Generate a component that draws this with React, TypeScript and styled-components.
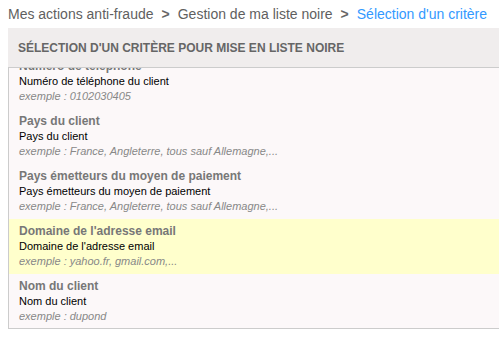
import { useEffect, useRef } from 'react';
import styled, { createGlobalStyle } from 'styled-components';

const GlobalStyle = createGlobalStyle`
  html, body {
    margin: 0;
    padding: 0;
    background: #ffffff;
    overflow: hidden;
  }
  body {
    font-family: 'Liberation Sans', Arial, sans-serif;
  }
`;

type Criterion = {
  title: string;
  desc: string;
  example: string;
};

const criteria: Criterion[] = [
  {
    title: 'Numéro de téléphone',
    desc: 'Numéro de téléphone du client',
    example: 'exemple : 0102030405',
  },
  {
    title: 'Pays du client',
    desc: 'Pays du client',
    example: 'exemple : France, Angleterre, tous sauf Allemagne,...',
  },
  {
    title: 'Pays émetteurs du moyen de paiement',
    desc: 'Pays émetteurs du moyen de paiement',
    example: 'exemple : France, Angleterre, tous sauf Allemagne,...',
  },
  {
    title: "Domaine de l'adresse email",
    desc: "Domaine de l'adresse email",
    example: 'exemple : yahoo.fr, gmail.com,...',
  },
  {
    title: 'Nom du client',
    desc: 'Nom du client',
    example: 'exemple : dupond',
  },
];

export default function App() {
  const listRef = useRef<HTMLDivElement>(null);

  useEffect(() => {
    // la liste est déjà un peu défilée
    if (listRef.current) listRef.current.scrollTop = 14;
  }, []);

  return (
    <>
      <GlobalStyle />
      <Page>
        <Breadcrumb>
          <Crumb>Mes actions anti-fraude</Crumb>
          <Sep>&gt;</Sep>
          <Crumb>Gestion de ma liste noire</Crumb>
          <Sep>&gt;</Sep>
          <Crumb $active>Sélection d'un critère</Crumb>
        </Breadcrumb>
        <Panel>
          <PanelHeader>SÉLECTION D'UN CRITÈRE POUR MISE EN LISTE NOIRE</PanelHeader>
          <List ref={listRef}>
            {criteria.map((item, i) => (
              <Item key={item.title} $highlighted={i === 3}>
                <ItemTitle>{item.title}</ItemTitle>
                <ItemDesc>{item.desc}</ItemDesc>
                <ItemExample>{item.example}</ItemExample>
              </Item>
            ))}
          </List>
        </Panel>
      </Page>
    </>
  );
}

const Page = styled.div`
  padding: 0 0 0 8px;
  width: 540px;
`;

const Breadcrumb = styled.div`
  display: flex;
  align-items: center;
  height: 28px;
  padding-bottom: 1px;
  box-sizing: border-box;
  font-size: 14px;
  color: #5f5f5f;
`;

const Crumb = styled.span<{ $active?: boolean }>`
  color: ${(p) => (p.$active ? '#3399ff' : '#5f5f5f')};
`;

const Sep = styled.span`
  margin: 0 8px 0 8px;
  font-weight: bold;
  color: #666;
`;

const Panel = styled.div`
  display: flex;
  flex-direction: column;
`;

const PanelHeader = styled.div`
  height: 39px;
  display: flex;
  align-items: center;
  padding-left: 10px;
  background-color: #f0eded;
  border-bottom: 1px solid #cccccc;
  font-size: 12px;
  font-weight: bold;
  color: #666;
`;

const List = styled.div`
  height: 260px;
  overflow: hidden;
  background-color: #fcf8f9;
  border-left: 1px solid #cccccc;
  border-bottom: 1px solid #cccccc;
`;

const Item = styled.div<{ $highlighted?: boolean }>`
  padding: 5px 10px;
  background-color: ${(p) => (p.$highlighted ? '#ffffcc' : 'transparent')};
  font-size: 11px;
  line-height: 15px;
`;

const ItemTitle = styled.div`
  font-size: 12px;
  font-weight: bold;
  color: #777;
`;

const ItemDesc = styled.div`
  color: #000;
`;

const ItemExample = styled.div`
  font-style: italic;
  color: #888;
`;
